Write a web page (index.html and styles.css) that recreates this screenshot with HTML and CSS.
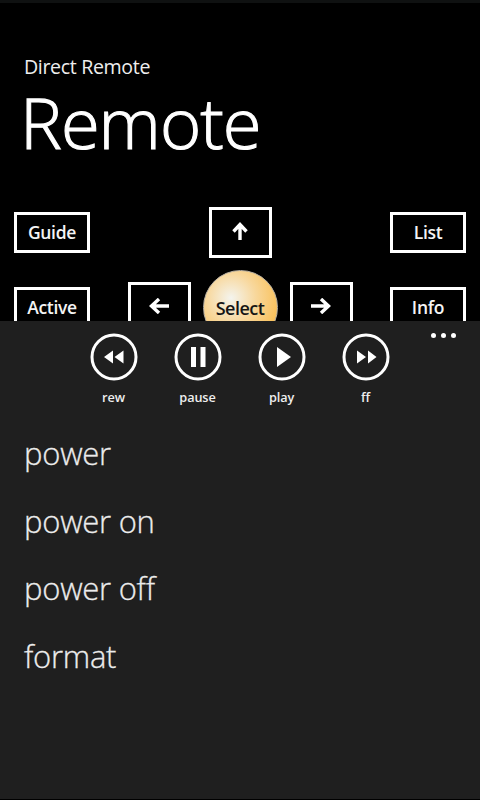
FILE: index.html
```html
<!DOCTYPE html>
<html lang="en">
<head>
<meta charset="utf-8">
<title>Direct Remote</title>
<link rel="stylesheet" href="styles.css">
</head>
<body>
<main class="remote">
  <header class="heading">
    <p class="app-name">Direct Remote</p>
    <h1 class="page-title">Remote</h1>
  </header>
  <section class="controls">
    <div class="side">
      <button class="key">Guide</button>
      <button class="key">Active</button>
    </div>
    <div class="dpad">
      <button class="key arrow up" aria-label="Up"><svg class="turn-up" width="20" height="16" viewBox="0 0 20 16"><path d="M2 8H17M10.5 1.5L17.5 8L10.5 14.5"/></svg></button>
      <button class="key arrow left" aria-label="Left"><svg class="turn-left" width="20" height="16" viewBox="0 0 20 16"><path d="M0 8H17M10 1L17.5 8L10 15"/></svg></button>
      <button class="select">Select</button>
      <button class="key arrow right" aria-label="Right"><svg width="20" height="16" viewBox="0 0 20 16"><path d="M0 8H17M10 1L17.5 8L10 15"/></svg></button>
    </div>
    <div class="side">
      <button class="key">List</button>
      <button class="key">Info</button>
    </div>
  </section>
</main>
<section class="app-bar">
  <div class="actions">
    <div class="action"><svg width="48" height="48" viewBox="0 0 48 48"><circle cx="24" cy="24" r="22"/><path d="M14 24L23 17.5V30.5ZM24.5 24L33.5 17.5V30.5Z"/></svg><span>rew</span></div>
    <div class="action"><svg width="48" height="48" viewBox="0 0 48 48"><circle cx="24" cy="24" r="22"/><path d="M17 14H22V34H17ZM26.5 14H31.5V34H26.5Z"/></svg><span>pause</span></div>
    <div class="action"><svg width="48" height="48" viewBox="0 0 48 48"><circle cx="24" cy="24" r="22"/><path d="M19 14V34L33 24Z"/></svg><span>play</span></div>
    <div class="action"><svg width="48" height="48" viewBox="0 0 48 48"><circle cx="24" cy="24" r="22"/><path d="M15 17.5V30.5L24 24ZM26 17.5V30.5L34.5 24Z"/></svg><span>ff</span></div>
  </div>
  <div class="more"><i></i><i></i><i></i></div>
  <ul class="menu">
    <li>power</li>
    <li>power on</li>
    <li>power off</li>
    <li>format</li>
  </ul>
</section>
</body>
</html>
```
FILE: styles.css
```css
* { box-sizing: border-box; }
body {
  margin: 0;
  width: 480px;
  height: 800px;
  overflow: hidden;
  position: relative;
  background: #000;
  color: #fff;
  font-family: "Open Sans", "Noto Sans", sans-serif;
}
.remote {
  height: 321px;
  overflow: hidden;
  border-top: 3px solid #0f1111;
}
.heading { height: 204px; padding: 50px 0 0 24px; }
.app-name {
  margin: 0;
  font-size: 19.6px;
  line-height: 28px;
  letter-spacing: -0.35px;
  color: #eee;
}
.page-title {
  margin: 0 0 0 -4px;
  font-size: 70.5px;
  line-height: 83px;
  font-weight: 300;
  letter-spacing: -1px;
  -webkit-text-stroke: 1.1px #fff;
}
.controls { display: flex; justify-content: space-between; padding: 0 14px; }
.side { display: flex; flex-direction: column; gap: 34px; padding-top: 5px; }
button { margin: 0; padding: 0; font: inherit; }
.key {
  width: 76px;
  height: 41px;
  padding-bottom: 2px;
  border: 3px solid #fff;
  background: #000;
  color: #f4f4f4;
  font-size: 17.5px;
  font-weight: 600;
  line-height: 24px;
  letter-spacing: -0.3px;
}
.dpad {
  display: grid;
  grid-template-columns: 63px 75px 63px;
  grid-template-rows: 51px 75px;
  gap: 11.5px 12px;
  align-items: center;
  justify-items: center;
}
.arrow {
  width: 63px;
  height: 51px;
  display: flex;
  align-items: center;
  justify-content: center;
}
.arrow svg { fill: none; stroke: #fff; stroke-width: 3.4; }
.up { grid-area: 1 / 2; }
.left { grid-area: 2 / 1; }
.right { grid-area: 2 / 3; }
.turn-up { transform: rotate(-90deg); }
.turn-left { transform: rotate(180deg); }
.select {
  grid-area: 2 / 2;
  width: 75px;
  height: 75px;
  padding-top: 2px;
  border: 1px solid #b9b2a5;
  border-radius: 50%;
  background: radial-gradient(circle at 27px 27px, #f4f4ee 0, #f8d79b 25px, #f9bd50 52px);
  color: #151515;
  font-size: 18px;
  font-weight: 600;
  letter-spacing: -0.5px;
}
.app-bar {
  position: relative;
  height: 478px;
  background: #1f1f1f;
}
.actions { display: flex; justify-content: center; padding-top: 12px; }
.action {
  width: 84px;
  display: flex;
  flex-direction: column;
  align-items: center;
  font-size: 12.7px;
  font-weight: 600;
  line-height: 18px;
  letter-spacing: -0.1px;
  color: #eee;
}
.action svg { fill: #fff; }
.action circle { fill: none; stroke: #fff; stroke-width: 3; }
.action span { margin: 7px 1px 0 0; }
.more { position: absolute; top: 12px; right: 24px; display: flex; gap: 5px; }
.more i { width: 5px; height: 5px; border-radius: 50%; background: #fff; }
.menu { margin: 0; padding: 14px 0 0 24px; list-style: none; }
.menu li {
  height: 67.5px;
  line-height: 67.5px;
  font-size: 31px;
  font-weight: 300;
  letter-spacing: -0.25px;
  color: #ececec;
  -webkit-text-stroke: 0.3px #ececec;
}
```
